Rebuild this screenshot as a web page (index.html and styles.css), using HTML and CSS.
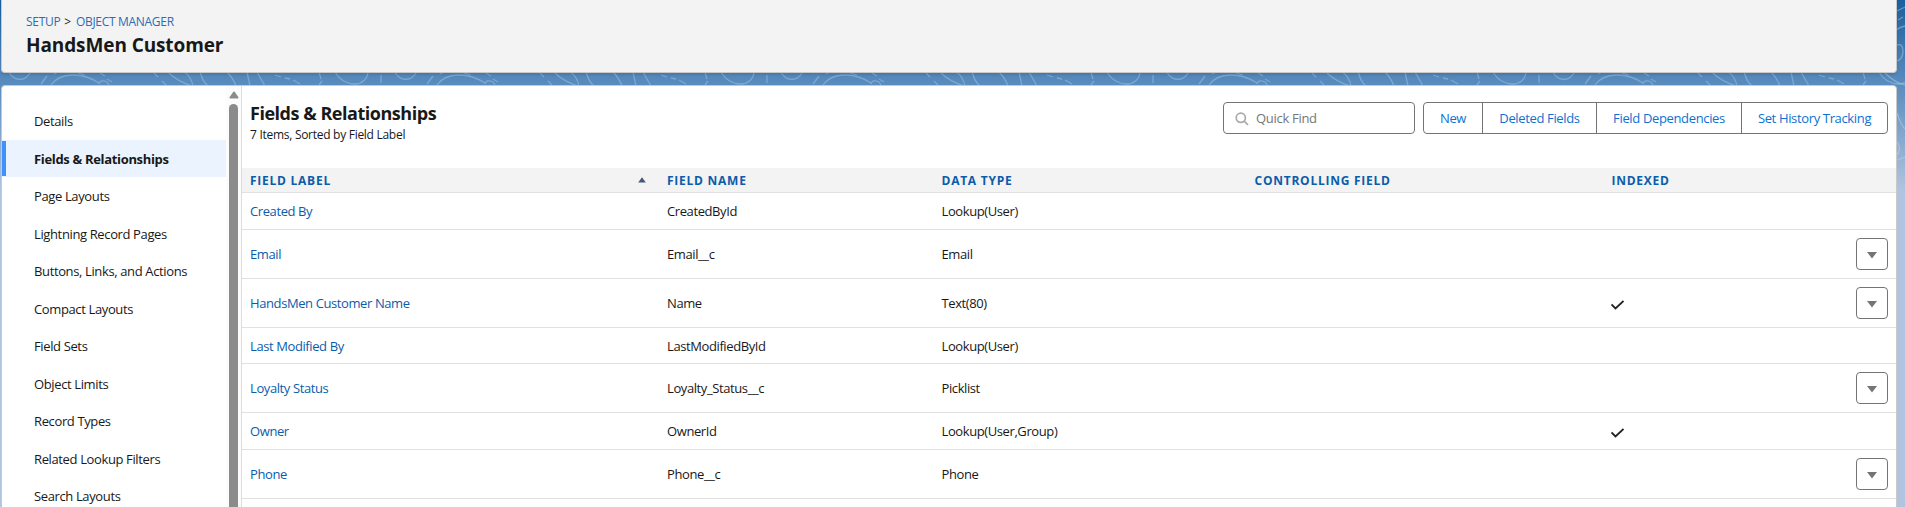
FILE: index.html
```html
<!DOCTYPE html>
<html lang="en">
<head>
<meta charset="utf-8">
<title>HandsMen Customer</title>
<link rel="stylesheet" href="styles.css">
</head>
<body>
<svg class="backdrop" width="1905" height="260">
  <defs>
    <g id="tile" fill="none" stroke="#b4cfe9" stroke-opacity=".42" stroke-width="1.3">
      <path d="M7 66C10 84 30 84 32 66M51 85C60 72 82 72 99 83"/>
      <path d="M99 84Q100 79 107 82L109 85M41 84L47 76M54 74L60 71M78 73L85 75M100 73l5 3M107 79l5 3"/>
      <path d="M154 73l4 4M162 81l4 4M169 73Q177 81 192 86M184 72Q191 76 193 86M200 71Q202 81 208 86M227 72Q233 78 236 86M247 72L250 86M257 72L265 86"/>
      <path d="M275 75l6 2M285 78l5 1M293 80l7 4M319 72l2 7M322 81l-3 4M335 72C345 89 367 87 368 72M381 75v8"/>
    </g>
  </defs>
  <use href="#tile"/><use href="#tile" x="386"/><use href="#tile" x="772"/><use href="#tile" x="1158"/><use href="#tile" x="1544"/>
  <path class="edge" d="M1897 11L1905 7M1898 20L1903 17M1896 30Q1900 27 1905 26M1897 45Q1903 43 1903 51T1897 61M1885 73Q1895 83 1905 85M1897 113Q1901 125 1905 129M1897 142Q1902 148 1897 155M1897 160L1905 157"/>
</svg>
<header class="page-header">
  <nav class="crumbs"><a>SETUP</a><span>&gt;</span><a>OBJECT MANAGER</a></nav>
  <h1>HandsMen Customer</h1>
</header>
<main class="panel">
  <aside class="side">
    <ul class="side-list">
      <li>Details</li>
      <li class="active">Fields &amp; Relationships</li>
      <li>Page Layouts</li>
      <li>Lightning Record Pages</li>
      <li>Buttons, Links, and Actions</li>
      <li>Compact Layouts</li>
      <li>Field Sets</li>
      <li>Object Limits</li>
      <li>Record Types</li>
      <li>Related Lookup Filters</li>
      <li>Search Layouts</li>
    </ul>
    <div class="scrollbar">
      <svg width="10" height="8" viewBox="0 0 10 8"><path d="M1.2 7.5Q0 7.300 .7 6L4 1.200Q5 0 6 1.200L9.300 6Q10 7.300 8.800 7.500Z" fill="#8b8b8b"/></svg>
      <div class="thumb"></div>
    </div>
  </aside>
  <section class="content">
    <div class="toolbar">
      <div class="heading">
        <h2>Fields &amp; Relationships</h2>
        <p>7 Items, Sorted by Field Label</p>
      </div>
      <div class="search">
        <svg width="14" height="14" viewBox="0 0 14 14" fill="none" stroke="#a9a9a9" stroke-width="1.7"><circle cx="5.800" cy="5.800" r="4.600"/><path d="M9.200 9.200L13 13"/></svg>
        <span>Quick Find</span>
      </div>
      <div class="group">
        <span class="b1">New</span><span class="b2">Deleted Fields</span><span class="b3">Field Dependencies</span><span class="b4">Set History Tracking</span>
      </div>
    </div>
    <div class="row head">
      <span class="sorted">FIELD LABEL<svg width="8" height="6" viewBox="0 0 8 6"><path d="M4 .3L7.800 5.500H.2Z" fill="#44597a"/></svg></span><span>FIELD NAME</span><span>DATA TYPE</span><span>CONTROLLING FIELD</span><span>INDEXED</span>
    </div>
    <div class="row"><a>Created By</a><span>CreatedById</span><span>Lookup(User)</span></div>
    <div class="row tall"><a>Email</a><span>Email__c</span><span>Email</span><span></span><span></span><button class="menu"><svg width="10" height="7" viewBox="0 0 10 7"><path d="M0 0H10L5 6.500Z"/></svg></button></div>
    <div class="row tall"><a>HandsMen Customer Name</a><span>Name</span><span>Text(80)</span><span></span><span><svg class="check" width="13" height="10" viewBox="0 0 13 10"><path d="M.5 4.500L4.500 8.500L12.500 1"/></svg></span><button class="menu"><svg width="10" height="7" viewBox="0 0 10 7"><path d="M0 0H10L5 6.500Z"/></svg></button></div>
    <div class="row short"><a>Last Modified By</a><span>LastModifiedById</span><span>Lookup(User)</span></div>
    <div class="row tall"><a>Loyalty Status</a><span>Loyalty_Status__c</span><span>Picklist</span><span></span><span></span><button class="menu"><svg width="10" height="7" viewBox="0 0 10 7"><path d="M0 0H10L5 6.500Z"/></svg></button></div>
    <div class="row"><a>Owner</a><span>OwnerId</span><span>Lookup(User,Group)</span><span></span><span><svg class="check" width="13" height="10" viewBox="0 0 13 10"><path d="M.5 4.500L4.500 8.500L12.500 1"/></svg></span></div>
    <div class="row tall"><a>Phone</a><span>Phone__c</span><span>Phone</span><span></span><span></span><button class="menu"><svg width="10" height="7" viewBox="0 0 10 7"><path d="M0 0H10L5 6.500Z"/></svg></button></div>
  </section>
</main>
</body>
</html>
```
FILE: styles.css
```css
* { box-sizing: border-box; }
body { margin: 0; height: 507px; overflow: hidden; padding: 0 8px 0 1px; position: relative; font: 13px/18px "Segoe UI", "Open Sans", "Noto Sans", sans-serif; letter-spacing: -.4px; color: #181818; background: linear-gradient(#1b5f9e 0, #5b8dbf 86px, #b0c4df 190px, #b0c4df 100%); }
h1, h2, p, ul { margin: 0; padding: 0; }
.backdrop { position: absolute; left: 0; top: 0; }
.edge { fill: none; stroke: #c5daee; stroke-opacity: .42; stroke-width: 1.3; }
.page-header { position: relative; height: 73px; padding: 12px 24px; background: #f3f3f3; border: 1px solid #c9c9c9; border-top: 0; border-radius: 0 0 4px 4px; box-shadow: 0 2px 2px rgba(0,0,0,.1); }
.crumbs { display: flex; gap: 5px; font-size: 12px; line-height: 19px; letter-spacing: -.3px; }
.crumbs a { color: #2b6cb3; }
.crumbs a + span { margin-left: -1px; }
h1 { font-size: 19px; line-height: 26px; margin-top: 1px; letter-spacing: -.1px; }
.panel { position: relative; display: flex; height: 440px; margin-top: 12px; background: #fff; border: 1px solid #c9c9c9; border-radius: 4px; overflow: hidden; }
.side { display: flex; width: 240px; border-right: 1px solid #dcdcdc; }
.side-list { list-style: none; width: 224px; padding-top: 17px; }
.side-list li { height: 37.45px; line-height: 37px; padding-left: 32px; letter-spacing: -.37px; }
.side-list .active { font-weight: 700; background: linear-gradient(#3f92fb, #3f92fb) 0 1px / 4px 35px no-repeat #ebf4fe; height: 37px; line-height: 39px; margin-bottom: 1px; letter-spacing: -.33px; }
.scrollbar { width: 15px; display: flex; flex-direction: column; align-items: center; padding-top: 5px; gap: 5px; background: #fcfcfc; }
.scrollbar svg { flex: none; }
.thumb { width: 9px; height: 500px; border-radius: 5px; background: #8b8b8b; }
.content { flex: 1; }
.toolbar { display: flex; align-items: flex-start; height: 82px; padding: 16px 8px 0; }
.heading { flex: 1; }
h2 { font-size: 18px; line-height: 23px; letter-spacing: -.47px; }
.heading p { font-size: 12px; line-height: 18px; margin-top: 1px; letter-spacing: -.28px; }
.search { display: flex; align-items: center; gap: 7px; width: 192px; height: 32px; padding: 0 11px; border: 1px solid #747474; border-radius: 4px; color: #757575; margin-right: 8px; letter-spacing: -.3px; }
.search svg { margin-top: 2px; }
.group { display: flex; width: 465px; height: 32px; border: 1px solid #747474; border-radius: 4px; color: #0b72d3; line-height: 30px; text-align: center; letter-spacing: -.35px; }
.group span + span { border-left: 1px solid #747474; }
.b1 { width: 58px; } .b2 { width: 114px; } .b3 { width: 145px; } .b4 { flex: 1; }
.row { display: grid; grid-template-columns: 417px 274.500px 313px 357px 1fr 32px; align-items: center; height: 37px; padding: 0 8px; border-bottom: 1px solid #e0e0e0; }
.row.tall { height: 49px; }
.row.short { height: 36px; }
.row a { color: #0b5cab; }
.row.head { height: 25px; padding-top: 1px; background: #f3f3f3; color: #0b5cab; font-size: 12px; font-weight: 700; letter-spacing: .75px; }
.sorted { display: flex; justify-content: space-between; align-items: center; padding-right: 21px; }
.sorted svg { margin-top: -1px; }
.menu { display: grid; place-items: center; width: 32px; height: 32px; padding: 2px 0 0; border: 1px solid #747474; border-radius: 4px; background: #fff; fill: #747474; }
.check { display: block; margin-top: 4px; margin-left: -.5px; fill: none; stroke: #222; stroke-width: 1.8; }
```
